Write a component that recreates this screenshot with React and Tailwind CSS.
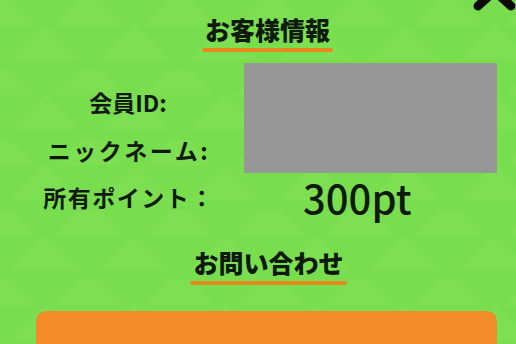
import React from 'react';

const jp = { fontFamily: '"Noto Sans CJK JP", "Noto Sans", sans-serif' };

function Heading({ children }) {
    return (
        <div className="flex flex-col items-center">
            <span className="text-[25px] leading-[32px] font-black text-[#0e1a0b] px-[3px]">{children}</span>
            <div className="mt-[3px] h-[4px] w-full rounded-full bg-[#e8891f]" />
        </div>
    );
}

function Pattern() {
    // faint triangle pattern in the background
    return (
        <svg className="absolute inset-0 w-full h-full" width="516" height="344">
            <defs>
                <pattern id="tri" width="90" height="70" patternUnits="userSpaceOnUse">
                    <polygon points="10,60 45,25 80,60" fill="#84e45b" />
                    <polygon points="-35,25 0,-10 35,25" fill="#84e45b" />
                    <polygon points="55,25 90,-10 125,25" fill="#84e45b" />
                </pattern>
            </defs>
            <rect width="516" height="344" fill="url(#tri)" opacity="0.4" />
        </svg>
    );
}

export default function App() {
    return (
        <div className="relative w-[516px] h-[344px] overflow-hidden bg-[#78de4e]" style={jp}>
            <Pattern />

            {/* close button, mostly off screen */}
            <svg className="absolute top-0 right-0" width="60" height="20" viewBox="0 0 60 20">
                <path d="M20 -26 L55 6 M57 -26 L22 6" stroke="#0b0b0b" strokeWidth="9" strokeLinecap="round" />
            </svg>

            <div className="relative ml-[36px] w-[461px] pt-[13px]">
                <div className="flex justify-center">
                    <div className="ml-[2px]">
                        <Heading>お客様情報</Heading>
                    </div>
                </div>

                {/* member info */}
                <div className="mt-[11px] flex gap-6">
                    <div className="w-[184px] h-[110px] flex flex-col items-center pt-[25px] gap-[20px] text-[#0e1a0b]">
                        <span className="text-[23px] leading-[28px] font-bold">会員ID:</span>
                        <span className="text-[23px] leading-[28px] font-bold tracking-[2.5px] ml-[2px]">ニックネーム:</span>
                    </div>
                    <div className="w-[253px] h-[110px] bg-[#979797]" />
                </div>

                <div className="flex gap-6 h-[48px] items-center text-[#0e1a0b]">
                    <span className="w-[184px] text-center text-[23px] leading-[28px] font-bold tracking-[1.5px] pl-[2px]">所有ポイント：</span>
                    <span className="w-[253px] pl-[59px] text-[40px] leading-[48px] font-medium">300pt</span>
                </div>

                <div className="flex justify-center mt-[25px]">
                    <div className="ml-[4px]">
                        <Heading>お問い合わせ</Heading>
                    </div>
                </div>

                <div className="mt-[26px] h-[80px] rounded-[10px] bg-[#f28b28]" />
            </div>
        </div>
    );
}
